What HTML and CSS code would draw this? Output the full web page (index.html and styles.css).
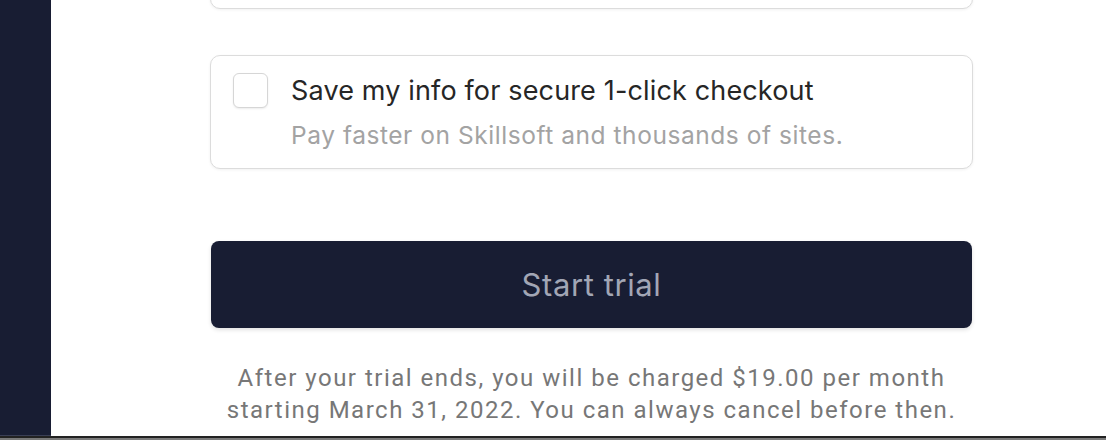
FILE: index.html
```html
<!DOCTYPE html>
<html>
<head>
<meta charset="utf-8">
<link rel="stylesheet" href="styles.css">
</head>
<body>
<div class="window">
  <div class="app">
    <aside class="sidebar"></aside>
    <main class="main">
      <div class="column">
        <div class="card card-prev"></div>
        <label class="card save-card">
          <span class="checkbox"></span>
          <span class="save-text">
            <span class="save-title">Save my info for secure 1-click checkout</span>
            <span class="save-sub">Pay faster on Skillsoft and thousands of sites.</span>
          </span>
        </label>
        <button class="start-btn" type="button">Start trial</button>
        <p class="terms">After your trial ends, you will be charged $19.00 per month<br>starting March 31, 2022. You can always cancel before then.</p>
      </div>
    </main>
  </div>
  <div class="bottom-bar"></div>
</div>
</body>
</html>
```

FILE: styles.css
```css
* { box-sizing: border-box; }
html, body { margin: 0; padding: 0; background: #fff; }
body { font-family: Inter, "Noto Sans", sans-serif; }
.window { height: 440px; display: flex; flex-direction: column; overflow: hidden; }
.app { height: 436px; display: flex; flex: none; }
.sidebar { width: 51px; flex: none; background: #181d33; border-bottom: 1px solid #3a3f55; }
.main { flex: 1; background: #fff; padding-left: 159px; }
.column { width: 763px; display: flex; flex-direction: column; }
.card { border: 1px solid #dcdcdc; border-radius: 10px; background: #fff; box-shadow: 0 1px 3px rgba(0,0,0,0.06); }
.card-prev { height: 60px; margin-top: -51px; }
.save-card { margin-top: 46px; height: 114px; display: flex; align-items: flex-start; padding: 17px 22px 0 22px; gap: 23px; }
.checkbox { width: 35px; height: 35px; flex: none; border: 1px solid #d6d6d6; border-radius: 6px; box-shadow: 0 1px 2px rgba(0,0,0,0.08); background: #fff; }
.save-text { display: flex; flex-direction: column; }
.save-title { font-size: 27px; line-height: 36px; letter-spacing: 0.15px; color: #262626; white-space: nowrap; }
.save-sub { font-size: 24.5px; line-height: 36px; letter-spacing: 0.55px; color: #a3a3a3; margin-top: 8px; white-space: nowrap; }
.start-btn { margin: 72px 1px 0 1px; height: 87px; border: none; border-radius: 8px; background: #181d33; color: #a2a6b5; font-family: Inter, "Noto Sans", sans-serif; font-size: 31px; letter-spacing: 0.6px; box-shadow: 0 2px 4px rgba(0,0,0,0.12); }
.terms { margin: 34px 0 0 0; text-align: center; font-family: Roboto, sans-serif; font-size: 24px; line-height: 32px; letter-spacing: 1.5px; color: #777; }
.bottom-bar { height: 4px; flex: none; background: #7a7a7a; border-top: 2px solid #222; }
```
